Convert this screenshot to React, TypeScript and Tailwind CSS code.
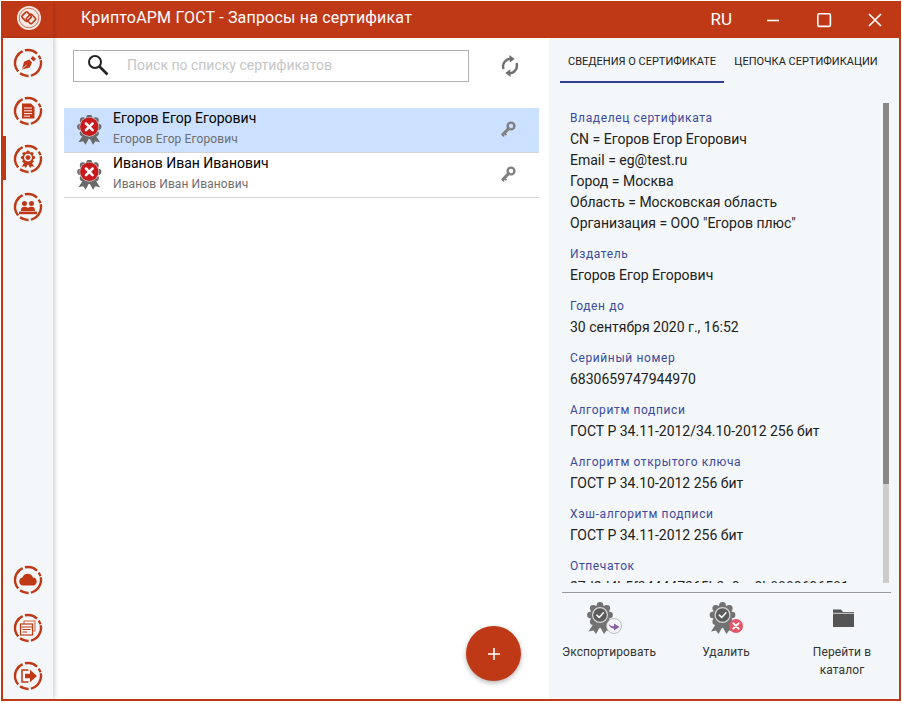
import React from "react";

const RED = "#bf3917";

function Ring({ children }: { children?: React.ReactNode }) {
  return (
    <svg width="30" height="30" viewBox="0 0 30 30" fill="none">
      <g transform="rotate(-12 15 15)">
        <circle cx="15" cy="15" r="13" stroke={RED} strokeWidth="2.4" strokeDasharray="20 2.5 9 2.5 24 2.5 13 2.5 4 2.2" />
      </g>
      {children}
    </svg>
  );
}

function Seal({ fill, x = 0, y = 0, s = 1 }: { fill: string; x?: number; y?: number; s?: number }) {
  const lobes = Array.from({ length: 8 }, (_, i) => {
    const a = (i * 2 * Math.PI) / 8 - Math.PI / 2;
    return <circle key={i} cx={12 + 9.6 * Math.cos(a)} cy={12 + 9.6 * Math.sin(a)} r="3.3" fill={fill} />;
  });
  return (
    <g transform={`translate(${x} ${y}) scale(${s})`}>
      <path d="M6 20 L0.5 28.5 L5.5 27.5 L8 31 L12.5 23Z M18 20 L23.5 28.5 L18.5 27.5 L16 31 L11.5 23Z" fill={fill} />
      {lobes}
      <circle cx="12" cy="12" r="10" fill={fill} />
    </g>
  );
}

function RowBadge() {
  return (
    <svg width="26" height="30" viewBox="0 0 26 30">
      <Seal fill="#6a6a6a" x={1} y={0.5} s={0.94} />
      <circle cx="12.3" cy="11.8" r="9.9" fill="#c6c6c6" />
      <circle cx="12.3" cy="11.8" r="9.2" fill="#c8191c" />
      <path d="M9 8.5 L15.6 15.1 M15.6 8.5 L9 15.1" stroke="#fff" strokeWidth="2.5" strokeLinecap="round" />
    </svg>
  );
}

function Key() {
  return (
    <svg width="15" height="16" viewBox="0 0 15 16" fill="none">
      <circle cx="10" cy="5" r="3.4" stroke="#808080" strokeWidth="2.4" />
      <path d="M7.6 7.6 L2 13.4" stroke="#808080" strokeWidth="3" strokeLinecap="round" />
      <path d="M3 11 L5.4 14.2 M1 13 L3 15.4" stroke="#808080" strokeWidth="1.6" />
    </svg>
  );
}

function CertRow({ name, selected }: { name: string; selected?: boolean }) {
  return (
    <div className={"flex h-[45px] items-center border-b border-[#d4d4d4] " + (selected ? "bg-[#cce0ff]" : "bg-white")}>
      <div className="ml-[13px] mt-[-1px] flex w-[36px] shrink-0">
        <RowBadge />
      </div>
      <div className="flex-1">
        <div className="mt-[-5px] text-[14px] leading-[20px] text-[#000]">{name}</div>
        <div className="mt-[3px] text-[12px] leading-[16px] tracking-[0.1px] text-[#6e6e6e]">{name}</div>
      </div>
      <div className="mr-[23px] mt-[-2px]">
        <Key />
      </div>
    </div>
  );
}

function Field({ label, lines }: { label: string; lines: string[] }) {
  return (
    <div className="mb-[10px]">
      <div className="text-[12px] leading-[21px] tracking-[0.62px] text-[#3b4a9f]">{label}</div>
      {lines.map((l) => (
        <div key={l} className="whitespace-nowrap text-[14px] leading-[21px] text-[#212121]">
          {l}
        </div>
      ))}
    </div>
  );
}

function ActionSeal({ x, children }: { x: number; children?: React.ReactNode }) {
  return (
    <svg width="46" height="34" viewBox="0 0 46 34">
      <g transform={`translate(${x} 1)`}>
        <Seal fill="#727272" />
        <circle cx="12" cy="12" r="7.4" fill="#5c5c5c" stroke="#d6d6d6" strokeWidth="1.2" />
        <path d="M8.8 12.2 L11.2 14.5 L15.4 9.8" stroke="#f4f7f9" strokeWidth="1.6" fill="none" strokeLinecap="round" strokeLinejoin="round" />
      </g>
      {children}
    </svg>
  );
}

function Action({ icon, label, className }: { icon: React.ReactNode; label: React.ReactNode; className: string }) {
  return (
    <div className={"flex w-[100px] shrink-0 flex-col items-center " + className}>
      <div className="flex h-[34px] items-center justify-center">{icon}</div>
      <div className="mt-[7px] text-center text-[12px] leading-[18px] tracking-[0.1px] text-[#333]">{label}</div>
    </div>
  );
}

export default function App() {
  return (
    <div className="bg-white pl-[1px] pt-[1px]">
      <div
        className="flex h-[700px] w-[900px] flex-col overflow-hidden border-2 border-[#bf3917] bg-white"
        style={{ fontFamily: "Roboto, 'Noto Sans', sans-serif" }}
      >
        <header className="flex h-[35px] shrink-0 items-center bg-[#bf3917] text-white">
          <div className="flex h-full w-[50px] shrink-0 items-start justify-center pl-[2px] pt-[3px] shadow-[2px_0_3px_rgba(0,0,0,0.1)]">
            <svg width="24" height="24" viewBox="0 0 24 24">
              <circle cx="12" cy="12" r="12" fill="#f6e9e4" />
              <circle cx="12" cy="12" r="9.8" fill="#f6e9e4" stroke="#cf6a50" strokeWidth="0.9" />
              <g transform="rotate(45 12 12)" fill="none" stroke="#bf3917" strokeWidth="1.7">
                <rect x="5.6" y="9" width="7.4" height="7.4" rx="1.4" />
                <rect x="10.4" y="7.6" width="7.4" height="7.4" rx="1.4" />
              </g>
            </svg>
          </div>
          <div className="mb-[5px] ml-[28px] flex-1 text-[16px] leading-[30px] tracking-[0.19px]">КриптоАРМ ГОСТ - Запросы на сертификат</div>
          <div className="mb-[2px] flex items-center">
            <div className="mr-[34px] text-[17px]">RU</div>
            <svg width="14" height="14" viewBox="0 0 14 14" className="mr-[36px]">
              <path d="M1 7.5 H13" stroke="#fff" strokeWidth="1.6" />
            </svg>
            <svg width="16" height="16" viewBox="0 0 16 16" className="mr-[36px]">
              <rect x="1.8" y="1.8" width="12.6" height="12.6" rx="1.5" fill="none" stroke="#fff" strokeWidth="1.6" />
            </svg>
            <svg width="14" height="14" viewBox="0 0 14 14" className="mr-[17px]">
              <path d="M1 1 L13 13 M13 1 L1 13" stroke="#fff" strokeWidth="1.7" />
            </svg>
          </div>
        </header>

        <div className="flex min-h-0 flex-1">
          <nav className="z-10 flex w-[50px] shrink-0 flex-col justify-between bg-[#f4f7f9] shadow-[2px_0_4px_rgba(0,0,0,0.18)]">
            <div className="pt-[1px]">
              <div className="flex h-[48px] items-center justify-center">
                <Ring>
                  <path d="M9 21.5 L11 13.8 L16.2 11.6 L19 14.4 L16.8 19.6 Z" fill={RED} />
                  <path d="M9.4 21 L13.6 16.8" stroke="#f4f7f9" strokeWidth="0.8" />
                  <path d="M17.6 10.4 L19.9 8 L23 11.1 L20.6 13.4 Z" fill={RED} />
                </Ring>
              </div>
              <div className="flex h-[48px] items-center justify-center">
                <Ring>
                  <path d="M9 7.5 H18 L21.5 11 V22.5 H9 Z" fill={RED} />
                  <path d="M11 12 H19 M11 14.8 H19 M11 17.6 H19 M11 20.2 H17" stroke="#f4f7f9" strokeWidth="1" />
                </Ring>
              </div>
              <div className="relative flex h-[48px] items-center justify-center">
                <div className="absolute left-0 top-[1px] h-[44px] w-[3px] bg-[#bf3917]" />
                <Ring>
                  <g transform="translate(8.4 7) scale(0.55)">
                    <Seal fill={RED} />
                    <circle cx="12" cy="12" r="7" fill="#f4f7f9" />
                    <circle cx="12" cy="12" r="4.4" fill={RED} />
                  </g>
                </Ring>
              </div>
              <div className="flex h-[48px] items-center justify-center">
                <Ring>
                  <circle cx="11.5" cy="11.5" r="2.5" fill={RED} />
                  <circle cx="18.5" cy="11.5" r="2.5" fill={RED} />
                  <path d="M8 19 C8 15.5 9.5 14.8 11.5 14.8 C13 14.8 14.2 15.2 15 16 C15.8 15.2 17 14.8 18.5 14.8 C20.5 14.8 22 15.5 22 19 Z" fill={RED} />
                  <rect x="6" y="19.6" width="18" height="2.6" fill={RED} />
                </Ring>
              </div>
            </div>
            <div>
              <div className="flex h-[48px] items-center justify-center">
                <Ring>
                  <path d="M10 20.5 A4 4 0 0 1 9.4 12.6 A5.6 5.6 0 0 1 20 12.6 A4 4 0 0 1 20.5 20.5 Z" fill={RED} />
                </Ring>
              </div>
              <div className="flex h-[48px] items-center justify-center">
                <Ring>
                  <rect x="11" y="8" width="11" height="10" fill="none" stroke="#d9775e" strokeWidth="1.2" />
                  <rect x="7.5" y="11" width="12" height="11" fill="#f4f7f9" stroke={RED} strokeWidth="1.2" />
                  <path d="M7.5 14 H19.5 M9.5 16.5 H17.5 M9.5 19 H14" stroke={RED} strokeWidth="1.2" />
                </Ring>
              </div>
              <div className="flex h-[47px] items-center justify-center">
                <Ring>
                  <path d="M15.5 9 H9 V21 H15.5" fill="none" stroke={RED} strokeWidth="1.5" />
                  <path d="M12 12.8 H17 V8.8 L24 15 L17 21.2 V17.2 H12 Z" fill={RED} />
                </Ring>
              </div>
            </div>
          </nav>

          <main className="relative min-w-0 flex-1">
            <div className="flex h-[70px] items-start pl-[20px] pt-[12px]">
              <div className="flex h-[32px] w-[396px] items-center border border-[#b0b0b0] pl-[12px]">
                <svg width="24" height="24" viewBox="0 0 24 24" fill="none">
                  <circle cx="9" cy="8" r="6" stroke="#222" strokeWidth="2" />
                  <path d="M13.5 12.5 L21.5 20.5" stroke="#222" strokeWidth="2.6" />
                </svg>
                <span className="mb-[2px] ml-[17px] text-[14px] text-[#c6c6c6]">Поиск по списку сертификатов</span>
              </div>
              <svg width="20" height="24" viewBox="0 0 20 24" className="ml-[31px] mt-[4px]" fill="none">
                <path d="M3.6 15 A7.6 7.6 0 0 1 12 4.8" stroke="#6e6e6e" strokeWidth="2.4" />
                <path d="M9.4 1 L14.6 5 L9.8 8.6 Z" fill="#6e6e6e" />
                <path d="M16.4 9 A7.6 7.6 0 0 1 8 19.2" stroke="#6e6e6e" strokeWidth="2.4" />
                <path d="M10.6 23 L5.4 19 L10.2 15.4 Z" fill="#6e6e6e" />
              </svg>
            </div>

            <div className="ml-[11px] w-[475px]">
              <CertRow name="Егоров Егор Егорович" selected />
              <CertRow name="Иванов Иван Иванович" />
            </div>

            <div className="absolute left-[413px] top-[588px] flex h-[55px] w-[55px] items-center justify-center rounded-full bg-[#bf3917] shadow-[0_2px_5px_rgba(0,0,0,0.3)]">
              <svg width="14" height="14" viewBox="0 0 14 14">
                <path d="M7 1 V13 M1 7 H13" stroke="#fff" strokeWidth="1.6" />
              </svg>
            </div>
          </main>

          <aside className="flex w-[350px] shrink-0 flex-col bg-[#f4f7f9]">
            <div className="flex h-[45px] shrink-0 items-start pl-[11px]">
              <div className="h-[45px] w-[164px] border-b-2 border-[#2f3f94] pt-[17px] text-center text-[11px] uppercase leading-[14px] text-[#212121]">
                Сведения о сертификате
              </div>
              <div className="h-[45px] w-[164px] pt-[17px] text-center text-[11px] uppercase leading-[14px] text-[#212121]">
                Цепочка сертификации
              </div>
            </div>

            <div className="mt-[20px] flex h-[480px] shrink-0 pl-[21px] pr-[10px]">
              <div className="min-w-0 flex-1 overflow-hidden pt-[5px]">
                <Field
                  label="Владелец сертификата"
                  lines={["CN = Егоров Егор Егорович", "Email = eg@test.ru", "Город = Москва", "Область = Московская область", 'Организация = ООО "Егоров плюс"']}
                />
                <Field label="Издатель" lines={["Егоров Егор Егорович"]} />
                <Field label="Годен до" lines={["30 сентября 2020 г., 16:52"]} />
                <Field label="Серийный номер" lines={["6830659747944970"]} />
                <Field label="Алгоритм подписи" lines={["ГОСТ Р 34.11-2012/34.10-2012 256 бит"]} />
                <Field label="Алгоритм открытого ключа" lines={["ГОСТ Р 34.10-2012 256 бит"]} />
                <Field label="Хэш-алгоритм подписи" lines={["ГОСТ Р 34.11-2012 256 бит"]} />
                <Field label="Отпечаток" lines={["27d2d4b5f344447365b3c0ee0b8880696581"]} />
              </div>
              <div className="w-[6px] shrink-0 bg-[#cccccc]">
                <div className="h-[381px] bg-[#888888]" />
              </div>
            </div>

            <div className="ml-[13px] mt-[9px] w-[329px] border-t border-[#999999]" />

            <div className="flex flex-1 pt-[9px]">
              <Action
                className="ml-[10px]"
                label="Экспортировать"
                icon={
                  <ActionSeal x={2}>
                    <circle cx="28" cy="24" r="7.5" fill="#f4f7f9" stroke="#b5b5b5" strokeWidth="0.9" />
                    <path d="M22.5 21 C23.5 24 26 24.4 28 24.2 V21.6 L33.5 25 L28 28.4 V26.4 C25.4 26.8 23.4 25 22.5 21 Z" fill="#8b5fa8" />
                  </ActionSeal>
                }
              />
              <Action
                className="ml-[17px]"
                label="Удалить"
                icon={
                  <ActionSeal x={7.5}>
                    <circle cx="33" cy="24" r="7" fill="#e4566a" />
                    <path d="M30.4 21.4 L35.6 26.6 M35.6 21.4 L30.4 26.6" stroke="#fff" strokeWidth="2" strokeLinecap="round" />
                  </ActionSeal>
                }
              />
              <Action
                className="ml-[16px]"
                label={
                  <>
                    Перейти в
                    <br />
                    каталог
                  </>
                }
                icon={
                  <svg width="22" height="18" viewBox="0 0 22 18" className="mb-[2px] ml-[2px]">
                    <path d="M1 0.5 H9 L11 3 H22 V18 H1 Z" fill="#555" />
                    <path d="M1 4.3 H22" stroke="#f4f7f9" strokeWidth="0.8" />
                  </svg>
                }
              />
            </div>
          </aside>
        </div>
      </div>
    </div>
  );
}
